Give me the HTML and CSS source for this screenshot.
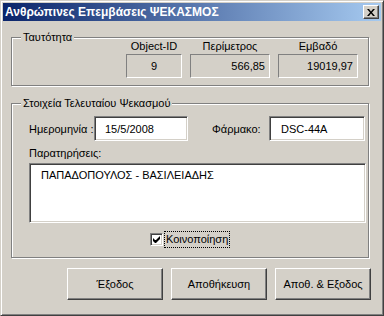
FILE: index.html
```html
<!DOCTYPE html>
<html lang="el">
<head>
    <meta charset="UTF-8">
    <title>Ανθρώπινες Επεμβάσεις ΨΕΚΑΣΜΟΣ</title>
    <link rel="stylesheet" href="styles.css">
</head>
<body>

    <div class="window">
        <div class="titlebar">
            <span class="title">Ανθρώπινες Επεμβάσεις ΨΕΚΑΣΜΟΣ</span>
            <span class="close-btn">
                <svg width="8" height="7" viewBox="0 0 8 7">
                    <path d="M0 0h2l2 2.5 2-2.5h2l-3 3.5 3 3.5h-2l-2-2.5-2 2.5h-2l3-3.5z" fill="#000"/>
                </svg>
            </span>
        </div>

        <div class="content">
            <!-- identity group -->
            <fieldset class="group ident">
                <legend>Ταυτότητα</legend>
                <div class="stats">
                    <div class="stat">
                        <div class="stat-label">Object-ID</div>
                        <div class="stat-box small center">9</div>
                    </div>
                    <div class="stat">
                        <div class="stat-label">Περίμετρος</div>
                        <div class="stat-box">566,85</div>
                    </div>
                    <div class="stat">
                        <div class="stat-label">Εμβαδό</div>
                        <div class="stat-box">19019,97</div>
                    </div>
                </div>
            </fieldset>

            <!-- last spraying group -->
            <fieldset class="group spray">
                <legend>Στοιχεία Τελευταίου Ψεκασμού</legend>
                <div class="spray-body">
                    <div class="field-row">
                        <span class="field-label">Ημερομηνία :</span>
                        <div class="input date">15/5/2008</div>
                        <span class="field-label drug-label">Φάρμακο:</span>
                        <div class="input drug">DSC-44A</div>
                    </div>
                    <div class="notes-label">Παρατηρήσεις:</div>
                    <div class="input notes">ΠΑΠΑΔΟΠΟΥΛΟΣ - ΒΑΣΙΛΕΙΑΔΗΣ</div>
                    <div class="check-row">
                        <span class="checkbox">
                            <svg width="7" height="7" viewBox="0 0 7 7">
                                <path d="M0 2v3l2 2h1l4-4v-3l-4 4h-1z" fill="#000"/>
                            </svg>
                        </span>
                        <span class="check-label">Κοινοποίηση</span>
                    </div>
                </div>
            </fieldset>

            <div class="buttons">
                <span class="btn">Έξοδος</span>
                <span class="btn">Αποθήκευση</span>
                <span class="btn">Αποθ. &amp; Εξοδος</span>
            </div>
        </div>
    </div>

</body>
</html>
```

FILE: styles.css
```css
body {
    margin: 0;
    font-family: "Liberation Sans", Arial, sans-serif;
    font-size: 11px;
    color: #000;
    background-color: #d4d0c8;
}
.window {
    width: 384px;
    height: 316px;
    box-sizing: border-box;
    background-color: #d4d0c8;
    border: 1px solid;
    border-color: #d4d0c8 #404040 #404040 #d4d0c8;
    box-shadow: inset 1px 1px #fff, inset -1px -1px #808080;
    padding: 2px;
    display: flex;
    flex-direction: column;
}
.titlebar {
    height: 18px;
    flex: none;
    display: flex;
    align-items: center;
    justify-content: space-between;
    padding: 0 2px 0 2px;
    background: linear-gradient(to right, #0a246a, #a6caf0);
}
.title {
    color: #fff;
    font-weight: bold;
    font-size: 12px;
}
.close-btn {
    width: 16px;
    height: 14px;
    box-sizing: border-box;
    background-color: #d4d0c8;
    border: 1px solid;
    border-color: #fff #404040 #404040 #fff;
    box-shadow: inset -1px -1px #808080;
    display: flex;
    align-items: center;
    justify-content: center;
}
.content {
    flex: 1;
    padding: 10px 12px 0 8px;
    display: flex;
    flex-direction: column;
}

/* group boxes */
.group {
    margin: 0;
    padding: 0;
    min-width: 0;
    border: 1px solid #808080;
    box-shadow: inset 1px 1px #fff, 1px 1px #fff;
}
.group legend {
    margin-left: 9px;
    padding: 0 2px;
    line-height: 12px;
    background-color: #d4d0c8;
}
.stats {
    display: flex;
    justify-content: flex-end;
    gap: 8px;
    padding: 0 10px 7px 0;
    margin-top: -3px;
}
.stat {
    display: flex;
    flex-direction: column;
    align-items: center;
}
.stat-label {
    line-height: 13px;
    margin-bottom: 1px;
}
.stat-box {
    width: 80px;
    height: 24px;
    box-sizing: border-box;
    border: 1px solid;
    border-color: #808080 #fff #fff #808080;
    padding-right: 4px;
    display: flex;
    align-items: center;
    justify-content: flex-end;
}
.stat-box.small {
    width: 56px;
}
.stat-box.center {
    justify-content: center;
    padding-right: 0;
}

.spray {
    margin-top: 11px;
}
.spray-body {
    padding: 0 2px 0 17px;
}
.field-row {
    display: flex;
    align-items: center;
    margin-top: 7px;
}
.field-label {
    flex: none;
    width: 65px;
    white-space: nowrap;
}
.drug-label {
    width: 57px;
    margin-left: 24px;
}
.input {
    flex: none;
    box-sizing: border-box;
    height: 25px;
    background-color: #fff;
    border: 1px solid;
    border-color: #808080 #fff #fff #808080;
    box-shadow: inset 1px 1px #404040, inset -1px -1px #d4d0c8;
    display: flex;
    align-items: center;
    white-space: nowrap;
}
.date {
    width: 94px;
    padding-left: 10px;
}
.drug {
    width: 96px;
    padding-left: 11px;
}
.notes-label {
    margin-top: 6px;
    line-height: 13px;
}
.notes {
    height: 60px;
    margin-top: 3px;
    align-items: flex-start;
    padding: 5px 0 0 11px;
}
.check-row {
    display: flex;
    align-items: center;
    gap: 1px;
    margin: 8px 0 9px;
    padding-left: 121px;
}
.checkbox {
    width: 13px;
    height: 13px;
    box-sizing: border-box;
    background-color: #fff;
    border: 1px solid;
    border-color: #808080 #fff #fff #808080;
    box-shadow: inset 1px 1px #404040, inset -1px -1px #d4d0c8;
    display: flex;
    align-items: center;
    justify-content: center;
}
.check-label {
    border: 1px dotted #000;
    padding: 1px 1px 2px;
}

/* dialog buttons */
.buttons {
    display: flex;
    justify-content: flex-end;
    gap: 8px;
    margin: 10px -2px 0 0;
}
.btn {
    width: 96px;
    height: 32px;
    box-sizing: border-box;
    border: 1px solid;
    border-color: #fff #404040 #404040 #fff;
    box-shadow: inset -1px -1px #808080;
    display: flex;
    align-items: center;
    justify-content: center;
}
```
